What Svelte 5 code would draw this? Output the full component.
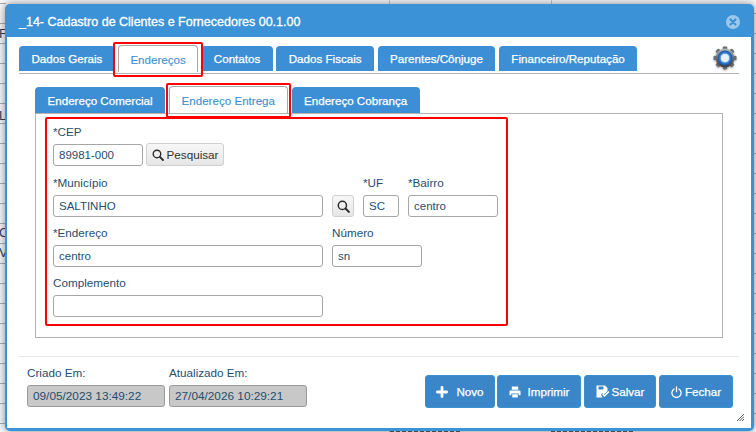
<script lang="ts">
	type Field = { label: string; value: string; width: number }

	const mainTabs = ['Dados Gerais', 'Endereços', 'Contatos', 'Dados Fiscais', 'Parentes/Cônjuge', 'Financeiro/Reputação']
	const subTabs = ['Endereço Comercial', 'Endereço Entrega', 'Endereço Cobrança']
	const gearTeeth = [0, 45, 90, 135, 180, 225, 270, 315]

	const enderecoRow: Field[] = [
		{ label: '*Endereço', value: 'centro', width: 270 },
		{ label: 'Número', value: 'sn', width: 90 }
	]

	// pedaços da tabela que aparecem atrás do diálogo
	const behind = [
		{ text: 'F', top: 26 },
		{ text: 'L', top: 108 },
		{ text: 'C', top: 225 },
		{ text: 'V', top: 245 }
	]
</script>

{#snippet lens(size: number)}
	<svg width={size} height={size} viewBox="0 0 14 14" aria-hidden="true">
		<circle cx="5.8" cy="5.8" r="4.4" fill="none" stroke="#2b2b2b" stroke-width="1.6" />
		<path d="M9.2 9.2l3.6 3.6" stroke="#2b2b2b" stroke-width="2.2" stroke-linecap="round" />
	</svg>
{/snippet}

<div class="page">
	{#each behind as b}
		<span class="cell" style="top: {b.top}px">{b.text}</span>
	{/each}
	<i class="scrap" style="left: 390px; width: 70px"></i>
	<i class="scrap" style="left: 551px; width: 82px"></i>

	<div class="dialog">
		<header class="titlebar">
			<span>_14- Cadastro de Clientes e Fornecedores 00.1.00</span>
			<svg class="close" width="14" height="14" viewBox="0 0 14 14" aria-hidden="true">
				<circle cx="7" cy="7" r="7" fill="#9cc8ec" />
				<path d="M4.5 4.5l5 5M9.5 4.5l-5 5" stroke="#3c8fd4" stroke-width="2.2" stroke-linecap="round" />
			</svg>
		</header>

		<div class="content">
			<nav class="tabs main">
				{#each mainTabs as tab, i}
					<span class="tab" class:active={i === 1}>{tab}</span>
				{/each}
				<svg class="gear" width="24" height="24" viewBox="0 0 24 24" aria-hidden="true">
					<defs>
						<linearGradient id="steel" x1="0" y1="0" x2="0" y2="1">
							<stop offset="0" stop-color="#b9bcc0" />
							<stop offset="0.5" stop-color="#6b6e73" />
							<stop offset="1" stop-color="#3e4044" />
						</linearGradient>
						<radialGradient id="ring" cx="50%" cy="50%" r="50%">
							<stop offset="0.5" stop-color="#8fc0ee" />
							<stop offset="0.75" stop-color="#2c78cc" />
							<stop offset="1" stop-color="#154f9e" />
						</radialGradient>
					</defs>
					{#each gearTeeth as a}
						<rect x="9.8" y="0.5" width="4.4" height="5" rx="1" fill="#6a6d72" transform="rotate({a} 12 12)" />
					{/each}
					<circle cx="12" cy="12" r="9.4" fill="url(#steel)" />
					<circle cx="12" cy="12" r="7.4" fill="url(#ring)" />
					<circle cx="12" cy="12" r="4" fill="#e6eff8" />
				</svg>
			</nav>

			<nav class="tabs sub">
				{#each subTabs as tab, i}
					<span class="tab" class:active={i === 1}>{tab}</span>
				{/each}
			</nav>

			<section class="panel">
				<div class="form">
					<div class="row first">
						<label class="field">
							<span>*CEP</span>
							<input style="width: 90px" value="89981-000" />
						</label>
						<button class="search">
							{@render lens(12)}
							Pesquisar
						</button>
					</div>

					<div class="row">
						<label class="field">
							<span>*Município</span>
							<input style="width: 270px" value="SALTINHO" />
						</label>
						<button class="lookup" aria-label="Pesquisar município">{@render lens(13)}</button>
						<label class="field">
							<span>*UF</span>
							<input style="width: 36px" value="SC" />
						</label>
						<label class="field">
							<span>*Bairro</span>
							<input style="width: 90px" value="centro" />
						</label>
					</div>

					<div class="row">
						{#each enderecoRow as f}
							<label class="field">
								<span>{f.label}</span>
								<input style="width: {f.width}px" value={f.value} />
							</label>
						{/each}
					</div>

					<div class="row">
						<label class="field">
							<span>Complemento</span>
							<input style="width: 270px" value="" />
						</label>
					</div>
				</div>
			</section>

			<footer class="footer">
				<label class="stamp">
					<span>Criado Em:</span>
					<input readonly value="09/05/2023 13:49:22" />
				</label>
				<label class="stamp">
					<span>Atualizado Em:</span>
					<input readonly value="27/04/2026 10:29:21" />
				</label>

				<div class="actions">
					<button class="action novo">
						<svg width="12" height="12" viewBox="0 0 12 12" aria-hidden="true">
							<path d="M6 1.4v9.2M1.4 6h9.2" stroke="#fff" stroke-width="2.8" stroke-linecap="round" />
						</svg>
						Novo
					</button>
					<button class="action imprimir">
						<svg width="12" height="12" viewBox="0 0 13 13" aria-hidden="true">
							<path fill="#fff" d="M3 0.5h7v3.5H3zM1.5 5h10a1 1 0 0 1 1 1v4h-2V8h-8v2h-2V6a1 1 0 0 1 1-1zM3.5 9h6v3.5h-6z" />
						</svg>
						Imprimir
					</button>
					<button class="action salvar">
						<svg width="14" height="13" viewBox="0 0 14 13" aria-hidden="true">
							<path fill="#fff" d="M0.5 0.5h8.5l2.5 2.5v3L8 9.5 6.5 8 5 9.5l1.5 3H0.5zM2.5 1.5v3h5v-3z" />
							<path d="M6.5 9l2 2 4.5-4.5" fill="none" stroke="#fff" stroke-width="1.5" />
						</svg>
						Salvar
					</button>
					<button class="action fechar">
						<svg width="11" height="12" viewBox="0 0 12 13" aria-hidden="true">
							<path d="M3.4 3.2a5 5 0 1 0 5.2 0M6 0.8v5.4" fill="none" stroke="#fff" stroke-width="1.4" stroke-linecap="round" />
						</svg>
						Fechar
					</button>
				</div>
			</footer>

			<svg class="grip" width="7" height="7" viewBox="0 0 7 7" aria-hidden="true">
				<path d="M7 0L0 7M7 2.5L2.5 7M7 5L5 7" stroke="#555" stroke-width="1" />
			</svg>
		</div>

		<!-- marcações vermelhas feitas sobre o print -->
		<i class="mark" style="left: 108px; top: 38px; width: 90px; height: 35px"></i>
		<i class="mark" style="left: 161px; top: 79px; width: 125px; height: 35px"></i>
		<i class="mark" style="left: 40px; top: 113px; width: 463px; height: 209px"></i>
	</div>
</div>

<style>
	:global(body) {
		margin: 0;
		background: #fff;
	}

	.page {
		width: 756px;
		height: 432px;
		position: relative;
		overflow: hidden;
		font-family: 'Liberation Sans', Arial, sans-serif;
		background-color: #fbfbfb;
		background-image:
			linear-gradient(#a9adb5 1px, transparent 1px),
			linear-gradient(#a9adb5 1px, transparent 1px),
			linear-gradient(90deg, transparent 389px, #c9c9c9 389px, #c9c9c9 390px, transparent 390px, transparent 551px, #c9c9c9 551px, #c9c9c9 552px, transparent 552px);
		background-size: 6px 20px, 6px 20px, 100% 100%;
		background-position: 0 3px, 750px 13px, 0 0;
		background-repeat: repeat-y, repeat-y, no-repeat;
	}

	.cell {
		position: absolute;
		left: -1px;
		color: #1f3a55;
		font-size: 13px;
	}

	.scrap {
		position: absolute;
		bottom: 0;
		height: 1px;
		background: repeating-linear-gradient(90deg, #555 0 4px, transparent 4px 6px);
	}

	.dialog {
		position: absolute;
		left: 5px;
		top: 4px;
		width: 749px;
		height: 427px;
		box-sizing: border-box;
		display: flex;
		flex-direction: column;
		background: #3c92d6;
		border-radius: 5px;
		padding: 0 3px 3px 2px;
		box-shadow: 0 0 10px rgba(40, 50, 70, 0.6);
	}

	.titlebar {
		height: 33px;
		box-sizing: border-box;
		flex: none;
		display: flex;
		align-items: center;
		justify-content: space-between;
		padding: 3px 11px 0 12px;
		color: #fff;
		font-size: 12.5px;
		-webkit-text-stroke: 0.3px #fff;
	}

	.content {
		flex: 1;
		position: relative;
		display: flex;
		flex-direction: column;
		background: #fff;
		padding: 9px 12px 0;
	}

	.tabs {
		display: flex;
		align-items: flex-end;
		gap: 3.5px;
		position: relative;
	}

	.tabs .tab {
		box-sizing: border-box;
		padding: 0 12.5px;
		display: flex;
		align-items: center;
		justify-content: center;
		background: #3c8fd4;
		color: #fff;
		font-size: 11.6px;
		-webkit-text-stroke: 0.25px currentColor;
		border-radius: 4px 4px 0 0;
	}

	.tabs .tab.active {
		background: #fff;
		color: #3c8fd4;
		padding: 0 11px;
		border: 1px solid #a8a8a8;
		border-bottom: none;
		-webkit-text-stroke: 0.1px currentColor;
	}

	.main {
		height: 27px;
		border-bottom: 1px solid #b4b4b4;
	}

	.main .tab {
		height: 25px;
		margin-bottom: 2px;
	}

	.main .tab.active {
		height: 27px;
		margin-bottom: 1px;
	}

	.gear {
		position: absolute;
		right: 2px;
		top: 0;
		filter: drop-shadow(0 1px 1px rgba(0, 0, 0, 0.3));
	}

	.sub {
		height: 26px;
		margin: 13px 0 0 16px;
		gap: 4px;
	}

	.sub .tab {
		height: 26px;
	}

	.sub .tab.active {
		height: 27px;
		padding: 0 11.5px;
	}

	.panel {
		box-sizing: border-box;
		height: 225px;
		width: 688px;
		margin-left: 16px;
		border: 1px solid #b4b4b4;
		padding: 11px 17px;
		color: #1f4e6e;
	}

	.form {
		display: flex;
		flex-direction: column;
		gap: 9px;
	}

	.row {
		display: flex;
		align-items: flex-end;
		gap: 9px;
	}

	.row.first {
		gap: 3px;
		margin-bottom: 1px;
	}

	.field {
		display: flex;
		flex-direction: column;
		gap: 5px;
		font-size: 11.7px;
		line-height: 14px;
	}

	input {
		box-sizing: border-box;
		height: 22px;
		padding: 0 5px;
		border: 1px solid #a6a6a6;
		border-radius: 3px;
		background: #fff;
		color: #1f4e6e;
		font: 11.5px 'Liberation Sans', Arial, sans-serif;
		outline: none;
	}

	.search,
	.lookup {
		box-sizing: border-box;
		display: flex;
		align-items: center;
		justify-content: center;
		gap: 3px;
		border: 1px solid #d0d0d0;
		border-radius: 3px;
		background: linear-gradient(#f7f7f7, #e6e6e6);
		color: #333;
		font: 11.7px 'Liberation Sans', Arial, sans-serif;
		padding: 0;
	}

	.search {
		width: 78px;
		height: 23px;
	}

	.lookup {
		width: 22px;
		height: 22px;
	}

	.footer {
		margin: 18px 0 0 -1px;
		padding: 9px 6px 0 9px;
		border-top: 1px solid #e8e8e8;
		display: flex;
		gap: 4px;
		color: #1f4e6e;
		font-size: 11.7px;
	}

	.stamp {
		display: flex;
		flex-direction: column;
		gap: 5px;
		line-height: 14px;
	}

	.stamp input {
		width: 138px;
		background: #c8c8c8;
		border-color: #9a9a9a;
		font-size: 11.8px;
	}

	.actions {
		margin: 9px 0 0 auto;
		display: flex;
		gap: 2px;
	}

	.action {
		height: 33px;
		box-sizing: border-box;
		display: flex;
		align-items: center;
		justify-content: center;
		padding: 0;
		border: 1px solid #3a90d0;
		border-radius: 3px;
		background: #3a86c8;
		color: #fff;
		font: 11.6px 'Liberation Sans', Arial, sans-serif;
		-webkit-text-stroke: 0.25px #fff;
	}

	.novo { width: 70px; gap: 8px; }
	.imprimir { width: 84px; gap: 7px; }
	.salvar { width: 72px; gap: 2px; margin-left: 1px; }
	.fechar { width: 74px; gap: 3px; margin-left: 1px; }

	.grip {
		position: absolute;
		right: 7px;
		bottom: 7px;
	}

	.mark {
		position: absolute;
		box-sizing: border-box;
		border: 2px solid #f00;
		border-radius: 2px;
	}
</style>
